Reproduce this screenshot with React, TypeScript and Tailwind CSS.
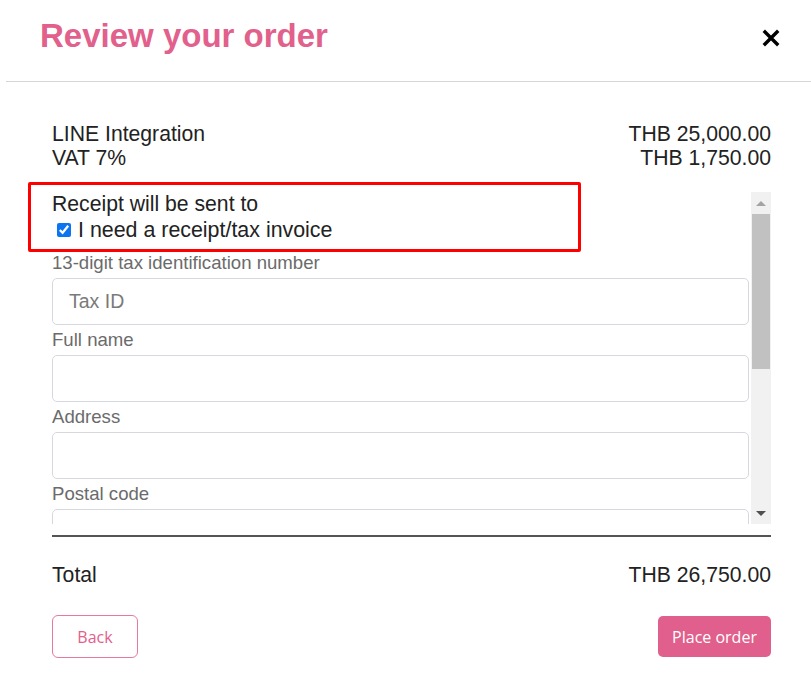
import React from 'react';

const Field: React.FC<{ label: string; placeholder?: string }> = ({ label, placeholder }) => (
  <div className="pb-[4px]">
    <div className="text-[18.6px] leading-[22px] text-[#6b6b6b]">{label}</div>
    <div className="mt-[4px] h-[47px] rounded-[5px] border border-[#d5d9df] bg-white flex items-center px-[16px]">
      {placeholder && <span className="text-[19.5px] text-[#7a7a7a]">{placeholder}</span>}
    </div>
  </div>
);

const App: React.FC = () => {
  return (
    <div
      className="relative w-[811px] h-[682px] bg-white text-[#222] overflow-hidden"
      style={{ fontFamily: '"Liberation Sans", Arial, sans-serif' }}
    >
      <div className="h-[81px] flex items-start justify-between pl-[40px] pr-[31px]">
        <h1 className="mt-[16px] text-[33px] leading-[40px] font-bold text-[#e2608c]">Review your order</h1>
        <button className="mt-[29px] text-black">
          <svg width="18" height="18" viewBox="0 0 18 18">
            <path d="M3 3 L15 15 M15 3 L3 15" stroke="currentColor" strokeWidth="3.4" strokeLinecap="square" />
          </svg>
        </button>
      </div>
      <div className="ml-[6px] h-px bg-[#d6d6d6]" />

      <div className="pl-[52px] pr-[40px] pt-[40px]">
        <div className="text-[21.2px] leading-[24px]">
          <div className="flex justify-between">
            <span>LINE Integration</span>
            <span>THB 25,000.00</span>
          </div>
          <div className="flex justify-between">
            <span>VAT 7%</span>
            <span>THB 1,750.00</span>
          </div>
        </div>

        <div className="mt-[22px] h-[332px] flex">
          <div className="flex-1 overflow-hidden pr-[2px]">
            <div className="text-[21.2px] leading-[24px]">Receipt will be sent to</div>
            <label className="mt-[2px] flex items-center text-[21.4px] leading-[24px]">
              <input type="checkbox" defaultChecked className="ml-[5px] mr-[7px] w-[14px] h-[14px] accent-[#0b74f0]" />
              I need a receipt/tax invoice
            </label>
            <div className="mt-[10px]">
              <Field label="13-digit tax identification number" placeholder="Tax ID" />
              <Field label="Full name" />
              <Field label="Address" />
              <Field label="Postal code" />
            </div>
          </div>
          <div className="w-[20px] bg-[#f1f1f1] flex flex-col items-center">
            <div className="h-[22px] flex items-center justify-center">
              <div className="w-0 h-0 border-l-[5px] border-r-[5px] border-b-[5px] border-l-transparent border-r-transparent border-b-[#a3a3a3]" />
            </div>
            <div className="w-[18px] h-[155px] bg-[#c1c1c1]" />
            <div className="flex-1" />
            <div className="h-[22px] flex items-center justify-center">
              <div className="w-0 h-0 border-l-[5px] border-r-[5px] border-t-[5px] border-l-transparent border-r-transparent border-t-[#505050]" />
            </div>
          </div>
        </div>

        <div className="mt-[11px] h-[2px] bg-[#555]" />

        <div className="mt-[26px] flex justify-between text-[21.2px] leading-[24px]">
          <span>Total</span>
          <span>THB 26,750.00</span>
        </div>

        <div className="mt-[28px] flex justify-between items-start" style={{ fontFamily: '"Open Sans", "Noto Sans", sans-serif' }}>
          <button className="w-[86px] h-[43px] rounded-[6px] border border-[#e57a9f] text-[16px] text-[#e2608c] bg-white">
            Back
          </button>
          <button className="mt-[1px] w-[113px] h-[41px] rounded-[5px] bg-[#e05f8c] text-[16px] text-white">
            Place order
          </button>
        </div>
      </div>

      <div className="absolute left-[28px] top-[182px] w-[553px] h-[70px] border-[3px] border-[#ff0000] rounded-[2px] pointer-events-none" />
    </div>
  );
};

export default App;
